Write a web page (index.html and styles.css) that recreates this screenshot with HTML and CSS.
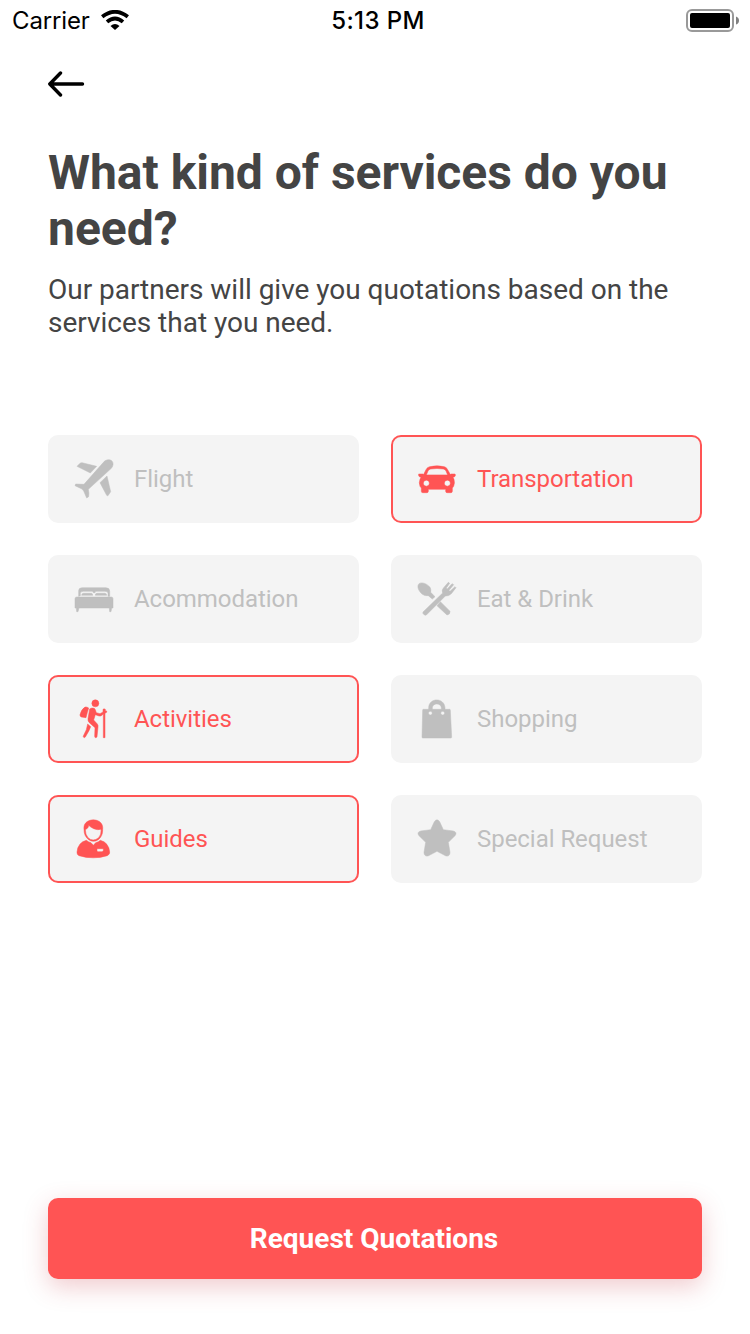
FILE: index.html
```html
<!DOCTYPE html>
<html lang="en">
<head>
    <meta charset="UTF-8">
    <title>Services</title>
    <link rel="stylesheet" href="styles.css">
</head>
<body>

<header class="status-bar">
    <div class="carrier">
        <span class="carrier-name">Carrier</span>
        <svg class="wifi" width="28" height="20" viewBox="0 0 28 20">
            <path d="M1.2 6.8 Q14 -3.2 26.8 6.8" stroke-width="3.8"/>
            <path d="M6 11.9 Q14 5.2 22 11.9" stroke-width="3.8"/>
            <path class="wifi-dot" d="M9.5 15.9 Q14 11.9 18.5 15.9 L14 20 Z"/>
        </svg>
    </div>
    <div class="time">5:13 PM</div>
    <svg class="battery" width="54" height="24" viewBox="0 0 54 24">
        <rect x="1" y="2" width="46" height="21" rx="5" fill="none" stroke="#999" stroke-width="2"/>
        <rect x="4" y="5" width="40" height="15" rx="2" fill="#000"/>
        <path d="M50 8.5 Q53 9.5 53 12.5 Q53 15.5 50 16.5 Z" fill="#808080"/>
    </svg>
</header>

<main class="page">
    <a class="back" href="#" aria-label="Back">
        <svg width="38" height="28" viewBox="0 0 38 28">
            <path d="M34.5 14 H2 M12.5 3 L1.8 14 L12.5 25"/>
        </svg>
    </a>

    <h1>What kind of services do you need?</h1>
    <p class="intro">Our partners will give you quotations based on the services that you need.</p>

    <div class="services">
        <div class="service">
            <svg class="icon" viewBox="24 27 120 120">
                <path d="M115 34 C122 28 133 28 138 33 C143 39 142 48 136 55 L67 118 Q70 130 68 140 L62 144 L53 123 L48 117 L27 107 L29 102 L54 103 Z"/>
                <path d="M33 49 L42 40 Q44 38 48 38 L92 49 L73 69 Z"/>
                <path d="M123 78 L134 125 L126 137 Q124 138 122 136 L102 98 Z"/>
            </svg>
            <span>Flight</span>
        </div>
        <div class="service selected">
            <svg class="icon" viewBox="33 27 120 120">
                <path fill-rule="evenodd" d="M50 79 L60 59 Q63 52 71 50 Q93 45 115 50 Q122 52 125 59 L136 79 Z M61 75 H125 L120 63 Q118 58 112 57 Q93 54 74 57 Q68 58 66 63 Z"/>
                <path fill-rule="evenodd" d="M38 72 H51 L55 76 H131 L135 72 H146 Q149 72 148 77 Q147 81 141 82 L144 88 Q147 97 143 109 L139 114 V124 Q139 128 135 128 H123 Q119 128 119 124 V118 H67 V124 Q67 128 63 128 H50 Q46 128 46 124 V114 L42 109 Q38 97 42 88 L45 82 Q39 81 38 77 Z M61 90.5 a9 9 0 1 0 .1 0 Z M124 90.5 a9 9 0 1 0 .1 0 Z"/>
            </svg>
            <span>Transportation</span>
        </div>
        <div class="service">
            <svg class="icon" viewBox="24 27 120 120">
                <path d="M38 79 V62 Q38 53 49 53 H119 Q131 53 131 63 V79 H126 V70 Q126 64 117 64 H92 Q87 64 87 68 H82 Q82 64 77 64 H52 Q43 64 43 70 V77 Z"/>
                <path d="M47 76 Q47 70 53 70 H76 Q80 70 80 76 Z"/>
                <path d="M88 76 Q88 70 93 70 H116 Q122 70 122 76 Z"/>
                <path d="M32 81 H136 Q141 81 141 86 V114 H137 L135 125 H131 L130 114 H39 L36 125 H32 L31 114 H27 V86 Q27 81 32 81 Z"/>
            </svg>
            <span>Acommodation</span>
        </div>
        <div class="service">
            <svg class="icon" viewBox="33 27 120 120">
                <path d="M39 41 C47 35 64 41 72 52 Q76 58 74 67 L87 80 L79 87 L67 77 Q56 79 48 72 C37 63 32 48 39 41 Z"/>
                <path d="M103 95 L132 124 Q133 134 123 135 L93 107 Z"/>
                <path d="M51 126 L110 69 Q106 60 113 53 L127 37 L131 40 L121 54 L124 57 L138 41 L143 44 L129 61 L132 64 L147 50 L150 53 L136 71 Q128 79 118 78 L61 135 Q57 137 53 133 Q49 130 51 126 Z"/>
            </svg>
            <span>Eat &amp; Drink</span>
        </div>
        <div class="service selected">
            <svg class="icon" viewBox="24 27 120 120">
                <circle cx="88" cy="40" r="10.5"/>
                <path d="M57 51 Q63 50 68 54 Q64 67 60 83 L46 81 Q41 79 42 74 Q46 58 57 51 Z"/>
                <path d="M71 57 Q77 52 85 55 Q88 57 91 68 L102 71 L111 66 L111 58 Q114 55 118 58 L118 62 L122 63 V67 L117 70 V143 H112 V72 L106 77 Q103 79 99 78 L88 74 L83 90 L94 102 Q97 106 96 111 L93 140 Q92 143 89 143 Q86 143 86 139 L87 113 L70 98 Q65 94 66 86 Z"/>
                <path d="M65 102 L74 110 L69 122 L58 141 Q56 144 53 142 Q51 141 52 138 L61 119 Z"/>
            </svg>
            <span>Activities</span>
        </div>
        <div class="service">
            <svg class="icon" viewBox="33 27 120 120">
                <path fill-rule="evenodd" d="M52 58 H68 V53 C69 22 115 22 117 53 V58 H131 Q133 58 133 61 L137 142 Q137 144 134 144 H50 Q48 144 48 141 L50 60 Q50 58 52 58 Z M79 58 H106 V53 C105 38 80 38 79 53 Z M73 64 a5.5 5.5 0 1 0 .1 0 Z M110 64 a5.5 5.5 0 1 0 .1 0 Z"/>
            </svg>
            <span>Shopping</span>
        </div>
        <div class="service selected">
            <svg class="icon" viewBox="24 27 120 120">
                <path fill-rule="evenodd" d="M54 58 C49 20 115 20 110 58 C111 72 105 83 97 89 Q82 99 68 89 C59 82 54 73 54 58 Z M58 59 Q58 74 66 83 Q81 97 98 83 Q107 73 105 58 Q96 61 83 56 Q73 51 68 46 Q68 55 58 59 Z"/>
                <path fill-rule="evenodd" d="M61 91 Q67 96 75 98 L82 106 L89 98 Q98 96 103 91 Q128 97 131 126 Q132 133 124 137 Q82 150 39 137 Q32 134 33 126 Q36 97 61 91 Z M93 116 V122 Q93 125 97 125 H108 Q112 125 112 121 V116 Z"/>
            </svg>
            <span>Guides</span>
        </div>
        <div class="service">
            <svg class="icon" viewBox="33 27 120 120">
                <path d="M85 35 Q93 24 101 35 L112 59 L142 63 Q155 67 147 77 L127 97 L132 127 Q132 140 120 138 L93 124 L66 138 Q54 140 54 127 L59 97 L39 77 Q31 67 44 63 L74 59 Z"/>
            </svg>
            <span>Special Request</span>
        </div>
    </div>

    <button class="request" type="button">Request Quotations</button>
</main>

</body>
</html>
```

FILE: styles.css
```css
* {
    box-sizing: border-box;
}

body {
    font-family: Roboto, sans-serif;
    margin: 0;
    height: 1334px;
    display: flex;
    flex-direction: column;
    background-color: #fff;
    color: #444;
    letter-spacing: -0.02px;
}

.status-bar {
    height: 40px;
    display: grid;
    grid-template-columns: 1fr auto 1fr;
    align-items: center;
    padding: 0 10px 0 12px;
    font-family: Inter, sans-serif;
    font-size: 24px;
    color: #000;
}

.carrier {
    display: flex;
    align-items: center;
    gap: 11px;
}

.carrier-name {
    letter-spacing: -0.15px;
}

.wifi {
    fill: none;
    stroke: #000;
}

.wifi .wifi-dot {
    fill: #000;
    stroke: none;
}

.time {
    font-weight: 500;
    padding-left: 4px;
    letter-spacing: 0.4px;
}

.battery {
    justify-self: end;
}

.page {
    flex: 1;
    display: flex;
    flex-direction: column;
    padding: 30px 48px 55px;
}

.back {
    height: 28px;
}

.back svg {
    display: block;
    fill: none;
    stroke: #000;
    stroke-width: 3.4;
    stroke-linecap: round;
    stroke-linejoin: round;
}

h1 {
    margin: 47px 0 0;
    font-size: 48px;
    line-height: 56px;
    font-weight: bold;
}

.intro {
    margin: 16px 0 0;
    font-size: 28px;
    line-height: 33px;
}

.services {
    display: grid;
    grid-template-columns: 1fr 1fr;
    gap: 32px;
    margin-top: 96px;
}

.service {
    height: 88px;
    display: flex;
    align-items: center;
    gap: 20px;
    padding-left: 24px;
    border: 2px solid #f4f4f4;
    border-radius: 10px;
    background-color: #f4f4f4;
    color: #bfbfbf;
    font-size: 24px;
    letter-spacing: -0.04px;
}

.service.selected {
    border-color: #ff5454;
    color: #ff5454;
}

.icon {
    width: 40px;
    height: 40px;
    fill: currentColor;
    stroke: currentColor;
    stroke-width: 1.5;
    stroke-linejoin: round;
}

.request {
    height: 81px;
    margin-top: auto;
    padding: 0 8px 0 6px;
    border: none;
    border-radius: 10px;
    background-color: #ff5454;
    box-shadow: 0 8px 24px rgba(200, 50, 65, 0.25);
    color: #fff;
    font-family: inherit;
    font-size: 28px;
    font-weight: bold;
}
```
